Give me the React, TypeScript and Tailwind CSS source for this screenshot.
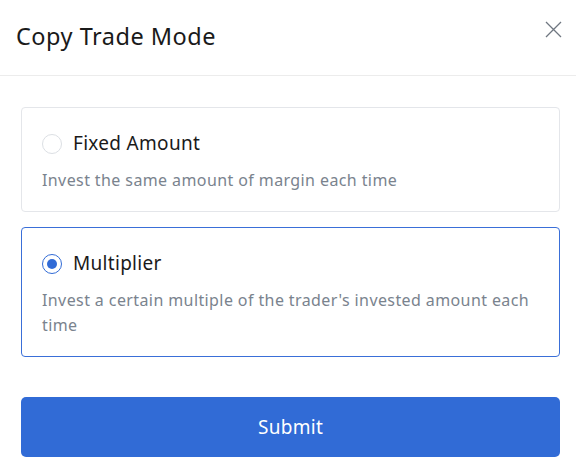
import { useState } from 'react';

export default function App() {
  const [mode, setMode] = useState<'fixed' | 'multiplier'>('multiplier');

  const options = [
    {
      id: 'fixed' as const,
      label: 'Fixed Amount',
      description: 'Invest the same amount of margin each time',
    },
    {
      id: 'multiplier' as const,
      label: 'Multiplier',
      description: "Invest a certain multiple of the trader's invested amount each time",
    },
  ];

  return (
    <div
      className="w-[576px] h-[470px] bg-white overflow-hidden"
      style={{ fontFamily: '"Noto Sans", "Open Sans", sans-serif' }}
    >
      {/* Header */}
      <div className="h-[76px] flex items-center justify-between pl-4 pr-[11px] border-b border-[#ececec]">
        <h2 className="text-[23.5px] tracking-[0.5px] text-[#1a1a1a] -mt-[2px]">Copy Trade Mode</h2>
        <button className="w-6 h-6 flex items-center justify-center -mt-[16px]">
          <svg width="17" height="17" viewBox="0 0 17 17" fill="none">
            <path d="M1 1L16 16M16 1L1 16" stroke="#6f7781" strokeWidth="1.3" />
          </svg>
        </button>
      </div>

      {/* Body */}
      <div className="pl-[21px] pr-[16px] pt-[31px] flex flex-col gap-[15px]">
        {options.map((opt) => {
          const active = mode === opt.id;
          return (
            <div
              key={opt.id}
              onClick={() => setMode(opt.id)}
              className={`rounded-[4px] border px-5 pt-[22px] pb-[18px] cursor-pointer ${
                active ? 'border-[#3a6fd8]' : 'border-[#e4e6ea]'
              }`}
            >
              <div className="flex items-center gap-[11px] h-[27px]">
                <span
                  className={`w-[20px] h-[20px] rounded-full border flex items-center justify-center ${
                    active ? 'border-[#316bd6]' : 'border-[#dcdfe4]'
                  }`}
                >
                  {active && <span className="w-[10px] h-[10px] rounded-full bg-[#316bd6]" />}
                </span>
                <span className="text-[19px] tracking-[0.3px] text-[#1a1a1a]">{opt.label}</span>
              </div>
              <p className="mt-[11px] text-[16px] tracking-[0.4px] leading-[25px] text-[#7a838e]">
                {opt.description}
              </p>
            </div>
          );
        })}

        <button className="mt-[25px] h-[60px] w-full rounded-[5px] bg-[#316bd6] text-white text-[19px] tracking-[0.3px]">
          Submit
        </button>
      </div>
    </div>
  );
}
